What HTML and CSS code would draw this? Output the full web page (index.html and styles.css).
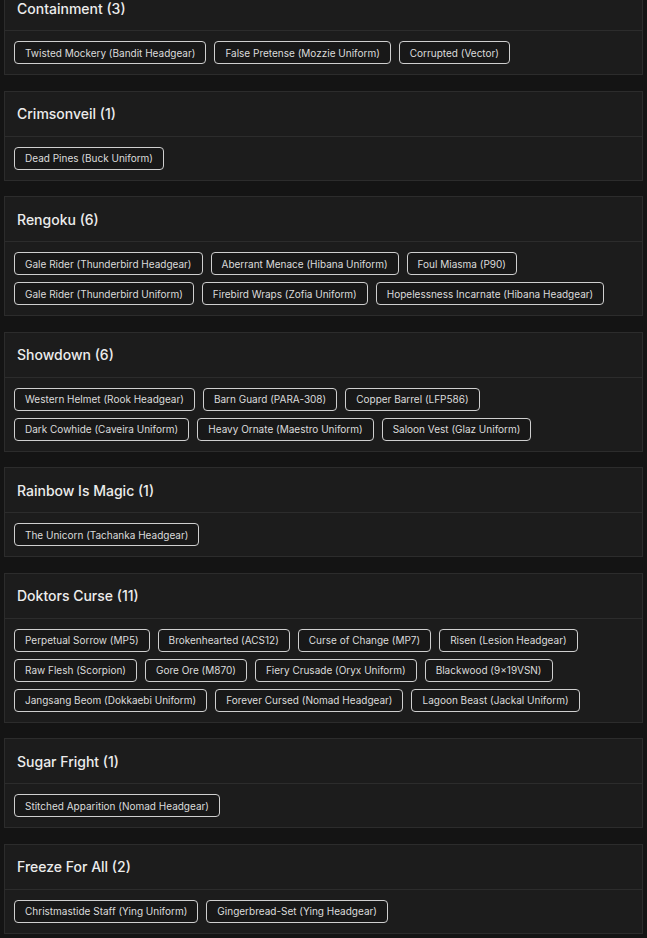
FILE: index.html
```html
<!DOCTYPE html>
<html>
<head>
<meta charset="utf-8">
<link rel="stylesheet" href="styles.css">
</head>
<body>
<main class="list">
  <section class="card">
    <h2 class="card-title">Containment (3)</h2>
    <div class="tags">
      <span class="tag">Twisted Mockery (Bandit Headgear)</span>
      <span class="tag">False Pretense (Mozzie Uniform)</span>
      <span class="tag">Corrupted (Vector)</span>
    </div>
  </section>
  <section class="card">
    <h2 class="card-title">Crimsonveil (1)</h2>
    <div class="tags">
      <span class="tag">Dead Pines (Buck Uniform)</span>
    </div>
  </section>
  <section class="card">
    <h2 class="card-title">Rengoku (6)</h2>
    <div class="tags">
      <span class="tag">Gale Rider (Thunderbird Headgear)</span>
      <span class="tag">Aberrant Menace (Hibana Uniform)</span>
      <span class="tag">Foul Miasma (P90)</span>
      <span class="tag">Gale Rider (Thunderbird Uniform)</span>
      <span class="tag">Firebird Wraps (Zofia Uniform)</span>
      <span class="tag">Hopelessness Incarnate (Hibana Headgear)</span>
    </div>
  </section>
  <section class="card">
    <h2 class="card-title">Showdown (6)</h2>
    <div class="tags">
      <span class="tag">Western Helmet (Rook Headgear)</span>
      <span class="tag">Barn Guard (PARA-308)</span>
      <span class="tag">Copper Barrel (LFP586)</span>
      <span class="tag">Dark Cowhide (Caveira Uniform)</span>
      <span class="tag">Heavy Ornate (Maestro Uniform)</span>
      <span class="tag">Saloon Vest (Glaz Uniform)</span>
    </div>
  </section>
  <section class="card">
    <h2 class="card-title">Rainbow Is Magic (1)</h2>
    <div class="tags">
      <span class="tag">The Unicorn (Tachanka Headgear)</span>
    </div>
  </section>
  <section class="card">
    <h2 class="card-title">Doktors Curse (11)</h2>
    <div class="tags">
      <span class="tag">Perpetual Sorrow (MP5)</span>
      <span class="tag">Brokenhearted (ACS12)</span>
      <span class="tag">Curse of Change (MP7)</span>
      <span class="tag">Risen (Lesion Headgear)</span>
      <span class="tag">Raw Flesh (Scorpion)</span>
      <span class="tag">Gore Ore (M870)</span>
      <span class="tag">Fiery Crusade (Oryx Uniform)</span>
      <span class="tag">Blackwood (9x19VSN)</span>
      <span class="tag">Jangsang Beom (Dokkaebi Uniform)</span>
      <span class="tag">Forever Cursed (Nomad Headgear)</span>
      <span class="tag">Lagoon Beast (Jackal Uniform)</span>
    </div>
  </section>
  <section class="card">
    <h2 class="card-title">Sugar Fright (1)</h2>
    <div class="tags">
      <span class="tag">Stitched Apparition (Nomad Headgear)</span>
    </div>
  </section>
  <section class="card">
    <h2 class="card-title">Freeze For All (2)</h2>
    <div class="tags">
      <span class="tag">Christmastide Staff (Ying Uniform)</span>
      <span class="tag">Gingerbread-Set (Ying Headgear)</span>
    </div>
  </section>
</main>
</body>
</html>
```
FILE: styles.css
```css
html, body {
  margin: 0;
  padding: 0;
  background: #141414;
  font-family: "Inter", "Noto Sans", sans-serif;
  color: #e0e0e0;
}
body {
  overflow: hidden;
}
.list {
  display: flex;
  flex-direction: column;
  gap: 15.5px;
  padding: 0 4px;
  margin-top: -15px;
}
.card {
  background: #1c1c1c;
  border: 1px solid #2c2c2c;
}
.card-title {
  margin: 0;
  height: 44px;
  display: flex;
  align-items: center;
  padding: 0 12px;
  font-size: 14px;
  font-weight: 500;
  color: #ececec;
  border-bottom: 1px solid #2c2c2c;
}
.tags {
  display: flex;
  flex-wrap: wrap;
  gap: 7px 8px;
  padding: 10px 9px;
}
.tag {
  display: inline-flex;
  align-items: center;
  height: 23px;
  box-sizing: border-box;
  padding: 0 10px;
  border: 1px solid #cfcfcf;
  border-radius: 4px;
  background: #181818;
  font-size: 10px;
  color: #dcdcdc;
  white-space: nowrap;
}
```
